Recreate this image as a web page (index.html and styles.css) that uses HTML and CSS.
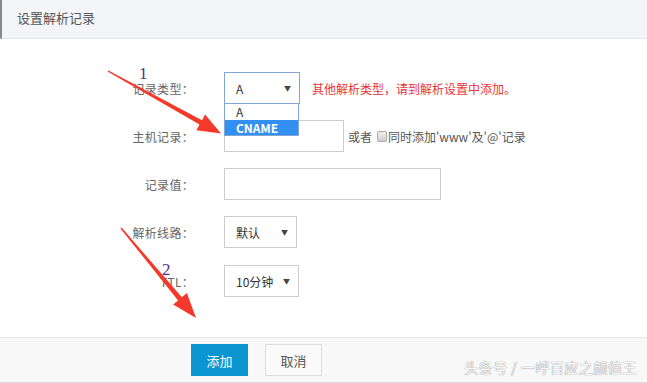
FILE: index.html
```html
<!DOCTYPE html>
<html lang="zh-CN">
<head>
    <meta charset="UTF-8">
    <title>设置解析记录</title>
    <link rel="stylesheet" href="styles.css">
</head>
<body>
    <div class="dialog">
        <div class="dialog-header">设置解析记录</div>

        <form class="record-form">
            <div class="form-row">
                <label class="form-label">记录类型：</label>
                <div class="select-wrap">
                    <div class="fake-select is-open w-type">
                        <span>A</span><span class="caret">▼</span>
                    </div>
                    <ul class="dropdown">
                        <li>A</li>
                        <li class="active">CNAME</li>
                    </ul>
                </div>
                <span class="hint-red">其他解析类型，请到解析设置中添加。</span>
            </div>

            <div class="form-row">
                <label class="form-label">主机记录：</label>
                <input type="text" class="text-input w-host">
                <span class="or-text">或者</span>
                <span class="check-box"></span>
                <span class="check-text">同时添加'www'及'@'记录</span>
            </div>

            <div class="form-row">
                <label class="form-label">记录值：</label>
                <input type="text" class="text-input w-value">
            </div>

            <div class="form-row">
                <label class="form-label">解析线路：</label>
                <div class="fake-select w-line">
                    <span>默认</span><span class="caret">▼</span>
                </div>
            </div>

            <div class="form-row">
                <label class="form-label">TTL：</label>
                <div class="fake-select w-ttl">
                    <span>10分钟</span><span class="caret">▼</span>
                </div>
            </div>
        </form>

        <div class="dialog-footer">
            <button type="button" class="btn btn-primary">添加</button>
            <button type="button" class="btn btn-default">取消</button>
        </div>
    </div>

    <!-- annotations drawn over the screenshot -->
    <svg class="marks" width="647" height="383" viewBox="0 0 647 383">
        <polygon fill="#f4392b" points="108.4,70.4 202,120.2 205.1,114.5 221,133.5 196.4,130.2 199.5,124.5 107.6,71.6"/>
        <polygon fill="#f4392b" points="121.6,227.6 181.9,297.2 186.9,293 196,318 173.1,304.6 178.1,300.4 120.4,228.4"/>
    </svg>
    <span class="step step-1">1</span>
    <span class="step step-2">2</span>
    <span class="watermark">头条号 / 一呼百应之颜值王</span>
</body>
</html>
```

FILE: styles.css
```css
* {
    margin: 0;
    padding: 0;
    box-sizing: border-box;
}

body {
    width: 647px;
    height: 383px;
    background: #fff;
    font-family: "Noto Sans CJK SC", "Liberation Sans", sans-serif;
    font-size: 12px;
    color: #666;
    position: relative;
    overflow: hidden;
}

.dialog-header {
    height: 39px;
    padding-left: 15px;
    line-height: 36px;
    font-size: 13px;
    color: #555;
    background: #f4f5f9;
    border-left: 2px solid #8a8a8a;
    border-bottom: 1px solid #e2e3e6;
}

.record-form {
    padding: 33px 0 40px;
}

.form-row {
    display: flex;
    align-items: center;
    height: 32px;
    margin-bottom: 16px;
}

.form-row:nth-child(4) {
    margin-bottom: 17px;
}

.form-row:last-child {
    margin-bottom: 0;
}

.form-label {
    width: 194px;
    margin-right: 30px;
    text-align: right;
    color: #666;
    letter-spacing: 0.3px;
}

.select-wrap {
    position: relative;
}

.fake-select {
    height: 32px;
    display: flex;
    align-items: center;
    justify-content: space-between;
    padding: 0 8px 0 11px;
    border: 1px solid #ccc;
    color: #333;
    background: #fff;
}

.fake-select.is-open {
    border-color: #7fa6d4;
}

.caret {
    font-size: 7px;
    color: #444;
}

.w-type { width: 76px; }
.w-line { width: 73px; }
.w-ttl { width: 75px; }

.dropdown {
    position: absolute;
    left: 0;
    top: 32px;
    width: 75px;
    list-style: none;
    background: #fff;
    border: 1px solid #7fa6d4;
    border-top: 0;
    z-index: 2;
}

.dropdown li {
    height: 16px;
    line-height: 16px;
    padding-left: 11px;
    font-size: 12px;
    color: #333;
    overflow: hidden;
}

.dropdown li.active {
    height: 15px;
    line-height: 15px;
    background: #3390f0;
    color: #fff;
    font-weight: 600;
}

.hint-red {
    margin-left: 12px;
    color: #e8343a;
}

.text-input {
    height: 32px;
    border: 1px solid #ccc;
    background: #fff;
    outline: none;
}

.w-host { width: 120px; }
.w-value { width: 217px; }

.or-text {
    margin-left: 4px;
    color: #555;
}

.check-box {
    width: 10px;
    height: 11px;
    margin-left: 5px;
    margin-right: 1px;
    border: 1px solid #aaa;
    border-radius: 2px;
    background: linear-gradient(#f2f2f2, #cfcfcf);
}

.check-text {
    color: #555;
}

.dialog-footer {
    height: 46px;
    display: flex;
    align-items: center;
    padding-left: 191px;
    gap: 17px;
    background: #f8f8f8;
    border-top: 1px solid #e6e6e6;
    border-bottom: 1px solid #dcdcdc;
}

.btn {
    width: 57px;
    height: 32px;
    font-family: inherit;
    font-size: 13px;
    border: 1px solid #ddd;
    cursor: pointer;
}

.btn-primary {
    background: #0b95d1;
    border-color: #0b95d1;
    color: #fff;
}

.btn-default {
    background: #fafafa;
    color: #555;
}

.marks {
    position: absolute;
    left: 0;
    top: 0;
    pointer-events: none;
    z-index: 3;
}

.step {
    position: absolute;
    font-family: "Liberation Serif", serif;
    font-size: 17px;
    color: #5a2d87;
    line-height: 1;
    z-index: 4;
}

.step-1 { left: 139px; top: 65px; }
.step-2 { left: 162px; top: 261px; }

.watermark {
    position: absolute;
    right: 10px;
    bottom: 6px;
    font-size: 14px;
    color: #f6f6f6;
    text-shadow: 0 0 1px #999, 0 0 1px #999;
    letter-spacing: 0.5px;
    z-index: 4;
}
```
